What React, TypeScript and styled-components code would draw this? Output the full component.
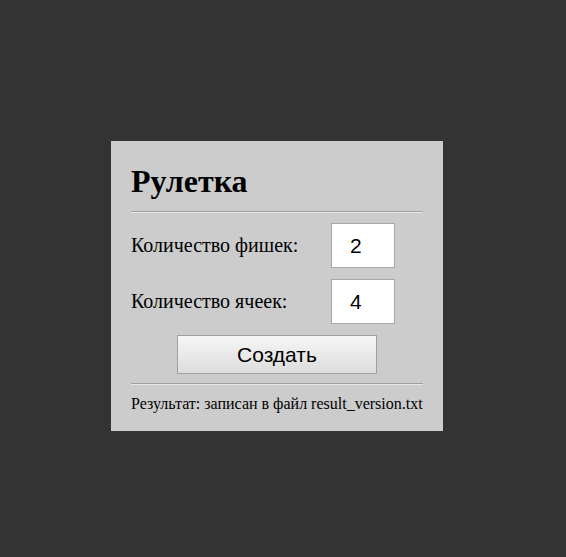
import React from "react";
import styled, { createGlobalStyle } from "styled-components";

const GlobalStyle = createGlobalStyle`
  html, body {
    margin: 0;
    padding: 0;
    background: #333333;
  }
`;

const Page = styled.div`
  min-height: 557px;
  padding: 141px 0 0 111px;
  box-sizing: border-box;
`;

const Panel = styled.div`
  width: 332px;
  box-sizing: border-box;
  padding: 20px 20px 18px 20px;
  background: #cccccc;
  font-family: "Liberation Serif", "Times New Roman", serif;
  color: #000;
`;

const Title = styled.h1`
  margin: 2px 0 11px 0;
  font-size: 32px;
  font-weight: bold;
  line-height: 37px;
`;

const Divider = styled.hr<{ $after: number }>`
  margin: 0 0 ${(p) => p.$after}px 0;
  border: none;
  border-top: 1px solid #a0a0a0;
  border-bottom: 1px solid #e6e6e6;
`;

const Row = styled.div`
  display: flex;
  align-items: center;
  justify-content: space-between;
  margin-bottom: 11px;
  padding-right: 28px;
`;

const Label = styled.label`
  font-size: 20px;
`;

const NumberInput = styled.input`
  width: 64px;
  height: 45px;
  box-sizing: border-box;
  border: 1px solid #a9a9a9;
  background: #fff;
  padding: 0 0 0 18px;
  font-family: "Liberation Sans", Arial, sans-serif;
  font-size: 21px;
  color: #000;
  outline: none;
`;

const ButtonRow = styled.div`
  display: flex;
  justify-content: center;
  margin-bottom: 9px;
`;

const CreateButton = styled.button`
  width: 200px;
  height: 39px;
  border: 1px solid #a0a0a0;
  background: linear-gradient(to bottom, #f6f6f6, #dddddd);
  font-family: "Liberation Sans", Arial, sans-serif;
  font-size: 21px;
  color: #000;
  cursor: pointer;
`;

const Result = styled.div`
  margin-top: 10px;
  font-size: 16px;
`;

export default function App() {
  const [chips, setChips] = React.useState("2");
  const [cells, setCells] = React.useState("4");

  return (
    <>
      <GlobalStyle />
      <Page>
        <Panel>
          <Title>Рулетка</Title>
          <Divider $after={10} />
          <Row>
            <Label>Количество фишек:</Label>
            <NumberInput value={chips} onChange={(e) => setChips(e.target.value)} />
          </Row>
          <Row>
            <Label>Количество ячеек:</Label>
            <NumberInput value={cells} onChange={(e) => setCells(e.target.value)} />
          </Row>
          <ButtonRow>
            <CreateButton>Создать</CreateButton>
          </ButtonRow>
          <Divider $after={0} />
          <Result>Результат: записан в файл result_version.txt</Result>
        </Panel>
      </Page>
    </>
  );
}
